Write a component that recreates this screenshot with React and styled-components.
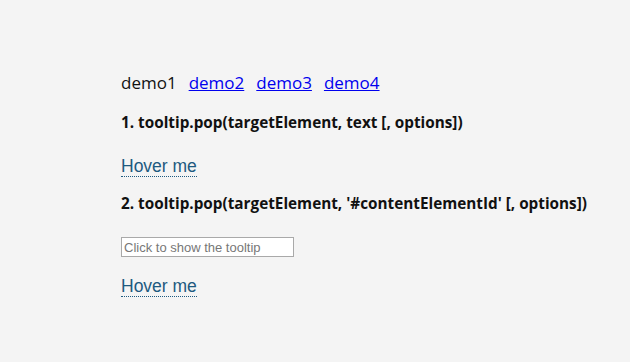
import React from "react";
import styled, { createGlobalStyle } from "styled-components";

const Global = createGlobalStyle`
  html, body {
    margin: 0;
    background: #f4f4f4;
  }
  body {
    font-family: "Open Sans", "Noto Sans", sans-serif;
    color: #111;
  }
`;

const Page = styled.div`
  padding: 70px 0 0 121px;
  min-height: 362px;
  box-sizing: border-box;
`;

const Menu = styled.nav`
  display: flex;
  gap: 12px;
  font-size: 17px;
  line-height: 26px;
`;

const MenuItem = styled.a`
  color: ${(p) => (p.$active ? "#111" : "#0000ee")};
  text-decoration: ${(p) => (p.$active ? "none" : "underline")};
`;

const Heading = styled.h4`
  margin: 15px 0 0;
  font-size: 15.3px;
  line-height: 22px;
  font-weight: 700;
`;

const Hover = styled.span`
  display: inline-block;
  margin-top: ${(p) => (p.$after === "field" ? "19px" : "23px")};
  font-family: "Liberation Sans", Arial, sans-serif;
  font-size: 17.5px;
  line-height: 20px;
  color: #1e5a80;
  border-bottom: 1px dotted #1e5a80;
`;

const Field = styled.input`
  display: block;
  margin-top: 23px;
  width: 173px;
  height: 20px;
  box-sizing: border-box;
  padding: 0 2px;
  border: 1px solid #a9a9a9;
  background: #fff;
  font-family: "Liberation Sans", Arial, sans-serif;
  font-size: 13px;
  &::placeholder {
    color: #777;
  }
`;

export default function App() {
  return (
    <>
      <Global />
      <Page>
        <Menu>
          <MenuItem $active>demo1</MenuItem>
          <MenuItem href="#">demo2</MenuItem>
          <MenuItem href="#">demo3</MenuItem>
          <MenuItem href="#">demo4</MenuItem>
        </Menu>
        <Heading>1. tooltip.pop(targetElement, text [, options])</Heading>
        <Hover>Hover me</Hover>
        <Heading>2. tooltip.pop(targetElement, '#contentElementId' [, options])</Heading>
        <Field placeholder="Click to show the tooltip" />
        <Hover $after="field">Hover me</Hover>
      </Page>
    </>
  );
}
